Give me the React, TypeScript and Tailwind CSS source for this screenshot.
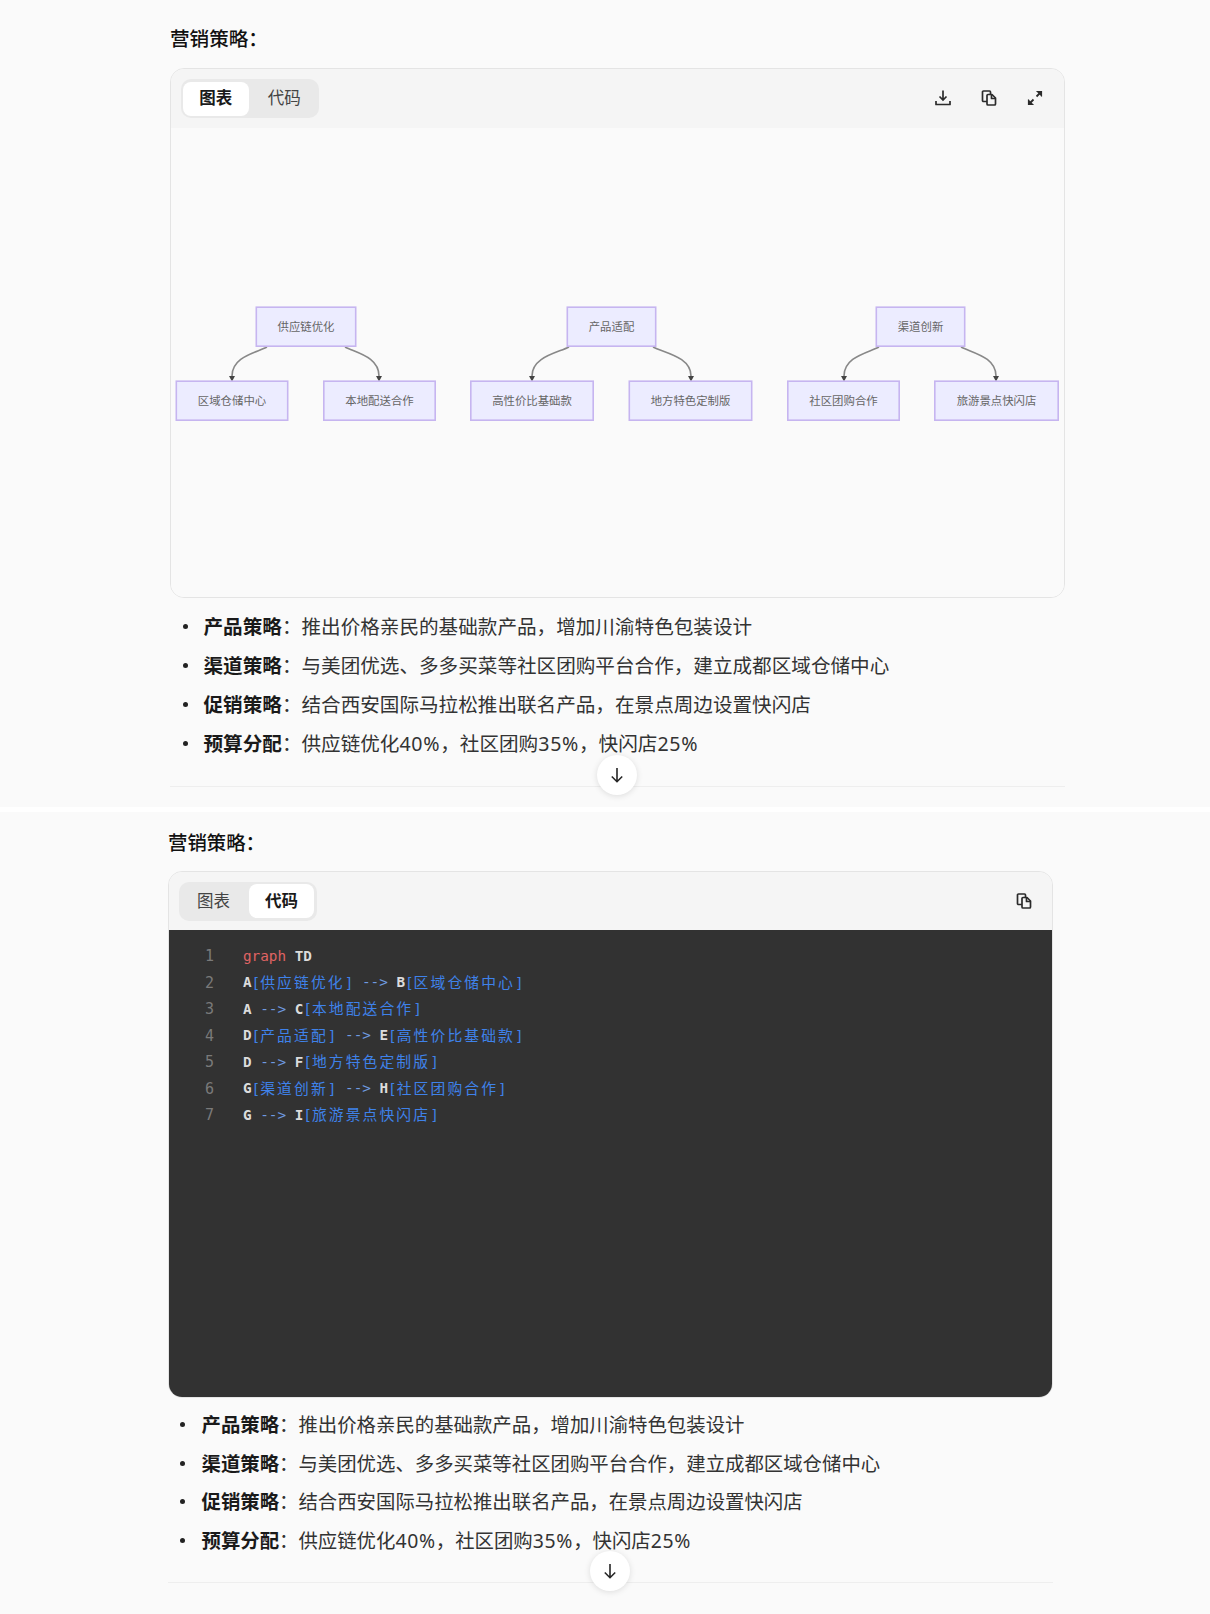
import React from 'react';

const sans = '"Noto Sans", "Noto Sans CJK SC", sans-serif';

const bullets = [
    ['产品策略', '推出价格亲民的基础款产品，增加川渝特色包装设计'],
    ['渠道策略', '与美团优选、多多买菜等社区团购平台合作，建立成都区域仓储中心'],
    ['促销策略', '结合西安国际马拉松推出联名产品，在景点周边设置快闪店'],
    ['预算分配', '供应链优化40%，社区团购35%，快闪店25%'],
];

const nodes = [
    { x: 256, y: 306, w: 100, label: '供应链优化' },
    { x: 176, y: 380, w: 112, label: '区域仓储中心' },
    { x: 323.5, y: 380, w: 112, label: '本地配送合作' },
    { x: 567, y: 306, w: 89, label: '产品适配' },
    { x: 470.5, y: 380, w: 123, label: '高性价比基础款' },
    { x: 629, y: 380, w: 123, label: '地方特色定制版' },
    { x: 876, y: 306, w: 89, label: '渠道创新' },
    { x: 787.5, y: 380, w: 112, label: '社区团购合作' },
    { x: 934.5, y: 380, w: 124, label: '旅游景点快闪店' },
];

// start x, end x of every edge, in page coordinates
const edges = [
    [267, 232, -1], [345, 379, 1],
    [569, 532, -1], [653, 691, 1],
    [879, 844, -1], [961, 996, 1],
];

const codeLines: [string, string, string?, string?][] = [
    ['A', '供应链优化', 'B', '区域仓储中心'],
    ['A ', '', 'C', '本地配送合作'],
    ['D', '产品适配', 'E', '高性价比基础款'],
    ['D ', '', 'F', '地方特色定制版'],
    ['G', '渠道创新', 'H', '社区团购合作'],
    ['G ', '', 'I', '旅游景点快闪店'],
];

const DownloadIcon = () => (
    <svg width="18" height="18" viewBox="0 0 18 18" fill="none" stroke="#2b2b2b" strokeWidth="1.7">
        <path d="M9 1.5v9M5.5 7.5 9 11l3.5-3.5" />
        <path d="M2 12v3.5h14V12" strokeLinejoin="round" />
    </svg>
);

const CopyIcon = () => (
    <svg width="18" height="18" viewBox="0 0 18 18" fill="none" stroke="#2b2b2b" strokeWidth="1.7" strokeLinejoin="round">
        <path d="M7 12.5H3.5a1 1 0 0 1-1-1V3a1 1 0 0 1 1-1h6a1 1 0 0 1 1 1v2" />
        <path d="M7 6.5a1 1 0 0 1 1-1h4l3.5 3.5v6a1 1 0 0 1-1 1H8a1 1 0 0 1-1-1z" fill="#f5f5f5" />
        <path d="M11.5 5.5V9.5h4" />
    </svg>
);

const ExpandIcon = () => (
    <svg width="18" height="18" viewBox="0 0 18 18" fill="none" stroke="#2b2b2b" strokeWidth="1.8">
        <path d="M10.5 7.5 15 3" />
        <path d="M10.5 2.5h5v5" fill="#2b2b2b" strokeWidth="1.2" />
        <path d="M7.5 10.5 3 15" />
        <path d="M7.5 15.5h-5v-5" fill="#2b2b2b" strokeWidth="1.2" />
    </svg>
);

const ArrowDown = () => (
    <svg width="18" height="18" viewBox="0 0 18 18" fill="none" stroke="#262626" strokeWidth="1.6">
        <path d="M9 2v13.5M3.8 10.5 9 15.7l5.2-5.2" />
    </svg>
);

const Tabs = ({ active }: { active: 'chart' | 'code' }) => (
    <div className="flex h-[39px] w-[138px] items-center rounded-[10px] bg-[#e9e9e9] p-[2px] text-[16.5px] text-[#444]">
        <div className={active === 'chart'
            ? 'flex h-[34px] w-[66px] items-center justify-center rounded-lg bg-white font-bold text-[#1a1a1a]'
            : 'flex h-[34px] w-[68px] items-center justify-center pr-[3px]'}>图表</div>
        <div className={active === 'code'
            ? 'flex h-[34px] w-[65px] items-center justify-center rounded-lg bg-white font-bold text-[#1a1a1a]'
            : 'flex h-[34px] w-[69px] items-center justify-center pl-[3px]'}>代码</div>
    </div>
);

const Diagram = () => (
    <div className="h-[469px] bg-[#fafafa]">
        {/* viewBox is shifted so numbers read as page coordinates */}
        <svg width="893" height="469" viewBox="171 127 893 469">
            {edges.map(([from, to, dir], i) => (
                <g key={i}>
                    <path
                        d={`M${from} 346 C${from + dir * 12} 352 ${to} 356 ${to} 375`}
                        fill="none"
                        stroke="#888"
                        strokeWidth="1.6"
                    />
                    <path d={`M${to - 3} 375 h6 l-3 5.5 z`} fill="#444" />
                </g>
            ))}
            {nodes.map(n => (
                <g key={n.label}>
                    <rect x={n.x + 0.3} y={n.y + 0.2} width={n.w - 0.6} height="39" fill="#ececff" stroke="#c6b5f0" strokeWidth="1.6" />
                    <text
                        x={n.x + n.w / 2}
                        y={n.y + 23.5}
                        textAnchor="middle"
                        fontSize="11.4"
                        fill="#666"
                        fontFamily='"Noto Sans CJK SC", sans-serif'
                    >
                        {n.label}
                    </text>
                </g>
            ))}
        </svg>
    </div>
);

const Label = ({ text }: { text: string }) => (
    <span className="text-[#3f82ea]">
        [<span className="text-[14.8px] tracking-[2.1px]">{text}</span>]
    </span>
);

const CodeView = () => (
    <div className="h-[467px] rounded-b-[13px] bg-[#323232] pt-[13px] font-['DejaVu_Sans_Mono','Noto_Sans_CJK_SC',monospace] text-[14.3px]">
        <div className="flex h-[26.5px] items-center">
            <span className="w-[74px] shrink-0 pr-[29px] text-right text-[15px] text-[#7a7a7a]">1</span>
            <span className="text-[#e06464]">graph</span>
            <span className="font-bold text-[#dcdcdc]">&nbsp;TD</span>
        </div>
        {codeLines.map(([left, leftLabel, right, rightLabel], i) => (
            <div key={i} className="flex h-[26.5px] items-center whitespace-pre">
                <span className="w-[74px] shrink-0 pr-[29px] text-right text-[15px] text-[#7a7a7a]">{i + 2}</span>
                <span className="font-bold text-[#dcdcdc]">{left}</span>
                {leftLabel && <Label text={leftLabel} />}
                <span className="text-[#6f9ae0]">{leftLabel ? ' --> ' : '--> '}</span>
                <span className="font-bold text-[#dcdcdc]">{right}</span>
                <Label text={rightLabel as string} />
            </div>
        ))}
    </div>
);

// percentages sit a little wider than the CJK text around them
const BulletBody = ({ text }: { text: string }) => (
    <>
        {text.split(/(\d+%)/).map((part, i) =>
            i % 2 ? <span key={i} className="tracking-[0.7px]">{part}</span> : part
        )}
    </>
);

const BulletList = ({ size }: { size: 'large' | 'small' }) => (
    <div className={size === 'large' ? 'pl-[12.5px] text-[19.6px] text-[#333]' : 'pl-[12px] text-[19.4px] text-[#333]'}>
        {bullets.map(([title, body]) => (
            <div key={title} className={size === 'large' ? 'flex h-[39px] items-center' : 'flex h-[38.6px] items-center'}>
                <span className={size === 'large'
                    ? 'mr-[16px] h-[5px] w-[5px] shrink-0 rounded-full bg-[#222]'
                    : 'mr-[16.5px] h-[5px] w-[5px] shrink-0 rounded-full bg-[#222]'} />
                <span>
                    <b className="font-bold text-[#1a1a1a]">{title}</b>：<BulletBody text={body} />
                </span>
            </div>
        ))}
    </div>
);

const Divider = ({ buttonLeft }: { buttonLeft: string }) => (
    <div className="relative h-px bg-[#eeeeee]">
        <div className={`absolute -top-[31px] flex h-10 w-10 items-center justify-center rounded-full bg-white shadow-[0_1px_6px_rgba(0,0,0,0.12)] ${buttonLeft}`}>
            <ArrowDown />
        </div>
    </div>
);

export default function App() {
    return (
        <div lang="zh-CN" className="flex h-[1614px] flex-col bg-white" style={{ fontFamily: sans }}>
            {/* chart tab */}
            <section className="h-[807px] bg-[#fafafa] pl-[170px] pr-[145px] pt-[24px]">
                <h3 className="h-[30px] text-[19.6px] font-medium leading-[30px] text-[#111]">营销策略：</h3>
                <div className="mt-[14px] overflow-hidden rounded-[14px] border border-[#e4e4e4]">
                    <div className="flex h-[59px] items-center justify-between bg-[#f5f5f5] pl-[10px] pr-[20px]">
                        <Tabs active="chart" />
                        <div className="-mt-[2px] flex gap-[28px]">
                            <DownloadIcon />
                            <CopyIcon />
                            <ExpandIcon />
                        </div>
                    </div>
                    <Diagram />
                </div>
                <div className="mt-[9px] mb-[23px]">
                    <BulletList size="large" />
                </div>
                <Divider buttonLeft="left-[427px]" />
            </section>

            {/* code tab */}
            <section className="mt-[5px] flex-1 bg-[#fafafa] pl-[168px] pr-[157px] pt-[16px]">
                <h3 className="h-[30px] text-[19.4px] font-medium leading-[30px] text-[#111]">营销策略：</h3>
                <div className="mt-[13px] rounded-[14px] border border-[#e4e4e4]">
                    <div className="flex h-[58px] items-center justify-between rounded-t-[13px] bg-[#f5f5f5] pl-[10px] pr-[19px]">
                        <Tabs active="code" />
                        <CopyIcon />
                    </div>
                    <CodeView />
                </div>
                <div className="mt-[7.5px] mb-[22.6px]">
                    <BulletList size="small" />
                </div>
                <Divider buttonLeft="left-[422px]" />
            </section>
        </div>
    );
}
